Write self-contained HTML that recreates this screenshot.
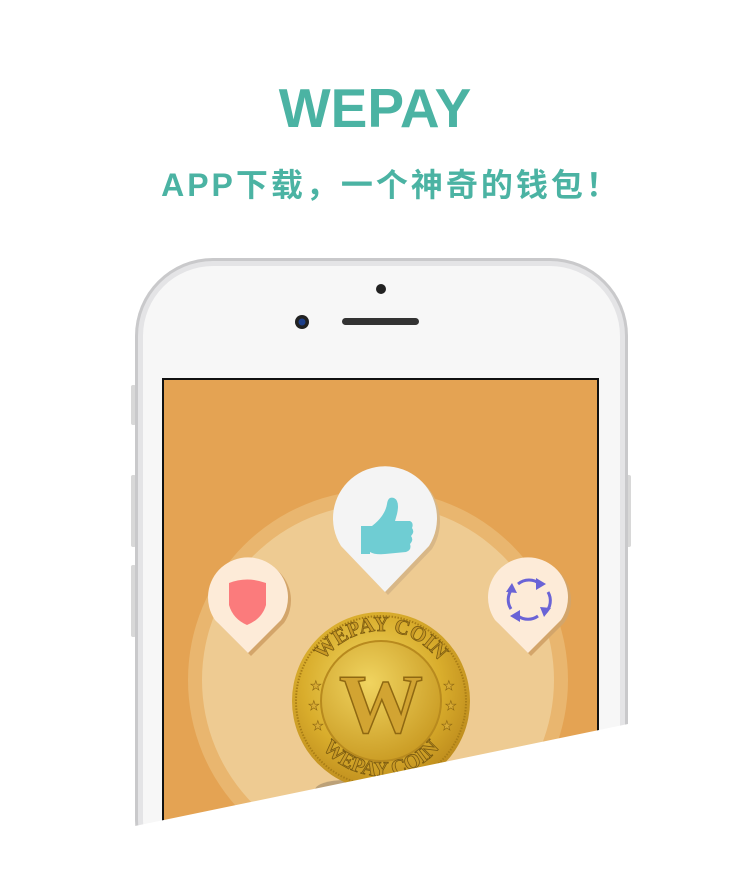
<!DOCTYPE html>
<html><head><meta charset="utf-8"><style>
html,body{margin:0;padding:0;background:#fff;width:750px;height:871px;overflow:hidden}
.t{position:absolute;left:0;width:750px;text-align:center;color:#4bb3a3;font-family:"Liberation Sans","Noto Sans CJK SC",sans-serif;font-weight:bold}
</style></head><body>
<div class="t" style="top:73px;font-size:55px;line-height:70px;">WEPAY</div>
<div class="t" style="top:165px;left:16px;font-size:32px;line-height:40px;letter-spacing:3px;">APP下载，一个神奇的钱包！</div>
<svg width="750" height="871" style="position:absolute;left:0;top:0" xmlns="http://www.w3.org/2000/svg">
<defs>
<radialGradient id="cg" cx="0.45" cy="0.4" r="0.65">
<stop offset="0" stop-color="#f3dc6a"/><stop offset="0.6" stop-color="#d9ad2c"/><stop offset="1" stop-color="#b9861a"/>
</radialGradient>
<radialGradient id="cg2" cx="0.4" cy="0.35" r="0.7">
<stop offset="0" stop-color="#f0d460"/><stop offset="1" stop-color="#c99a22"/>
</radialGradient>
<clipPath id="scr"><rect x="164" y="380" width="433" height="460"/></clipPath>
</defs>
<rect x="131" y="385" width="5" height="40" rx="2" fill="#d8d8d8"/>
<rect x="131" y="475" width="5" height="72" rx="2" fill="#d8d8d8"/>
<rect x="131" y="565" width="5" height="72" rx="2" fill="#d8d8d8"/>
<rect x="626" y="475" width="5" height="72" rx="2" fill="#d8d8d8"/>
<rect x="135" y="258" width="493" height="640" rx="78" fill="#c9c9cb"/>
<rect x="138" y="261" width="487" height="634" rx="75" fill="#e4e4e6"/>
<rect x="143" y="266" width="477" height="624" rx="70" fill="#f7f7f7"/>
<circle cx="381" cy="289" r="5" fill="#222"/>
<circle cx="302" cy="322" r="7" fill="#222"/><circle cx="302" cy="322" r="3.5" fill="#1d3f8a"/>
<rect x="342" y="318" width="77" height="7" rx="3.5" fill="#333"/>
<rect x="162" y="378" width="437" height="470" fill="#111"/>
<g clip-path="url(#scr)">
<rect x="164" y="380" width="433" height="470" fill="#e4a353"/>
<circle cx="378" cy="680" r="190" fill="#e9b66f"/>
<circle cx="378" cy="680" r="176" fill="#eecb92"/>
<ellipse cx="345" cy="790" rx="30" ry="10" fill="#a68e6e" opacity="0.7"/>
<circle cx="381" cy="701" r="89" fill="url(#cg)"/>
<circle cx="381" cy="701" r="85" fill="none" stroke="#a97d16" stroke-width="2" stroke-dasharray="1.5 1.5"/>
<circle cx="381" cy="701" r="60" fill="url(#cg2)" stroke="#b88a1e" stroke-width="2"/>
<text x="381" y="732" text-anchor="middle" font-family="Liberation Serif,serif" font-weight="bold" font-size="84" fill="#d2a432" stroke="#8f6812" stroke-width="1.5">W</text>
<path id="arcT" d="M311 701 A70 70 0 0 1 451 701" fill="none"/>
<text font-family="Liberation Serif,serif" font-weight="bold" font-size="21" fill="#c99a26" stroke="#7a5a10" stroke-width="0.8"><textPath href="#arcT" startOffset="50%" text-anchor="middle">WEPAY COIN</textPath></text>
<path id="arcB" d="M306 701 A75 75 0 0 0 456 701" fill="none"/>
<text font-family="Liberation Serif,serif" font-weight="bold" font-size="21" fill="#c99a26" stroke="#7a5a10" stroke-width="0.8"><textPath href="#arcB" startOffset="50%" text-anchor="middle">WEPAY COIN</textPath></text>
<g fill="#d8ab34" stroke="#8f6812" stroke-width="0.6" font-size="13" font-family="DejaVu Sans">
<text x="310" y="690">★</text><text x="308" y="710">★</text><text x="312" y="730">★</text>
<text x="443" y="690">★</text><text x="445" y="710">★</text><text x="441" y="730">★</text>
</g>
<path d="M341 546 A52 52 0 1 1 429 546 L385 592 Z" fill="#d8b787" transform="translate(3,3)"/>
<path d="M341 546 A52 52 0 1 1 429 546 L385 592 Z" fill="#f4f4f4"/>
<path d="M361 554 L361 526 L372 526 Q385 516 387 504 Q388 496 394 498 Q400 501 397 514 L395 521 L410 521 Q414 523 412 528 Q415 532 411 536 Q414 540 410 544 Q412 550 406 552 L385 554 Q375 555 370 552 L370 554 Z" fill="#6fcdd3"/>
<path d="M215 620 A40 40 0 1 1 281 620 L248 653 Z" fill="#d3a56a" transform="translate(3,3)"/>
<path d="M215 620 A40 40 0 1 1 281 620 L248 653 Z" fill="#fdebd8"/>
<path d="M229 583 Q247 576 266 583 L266 605 Q262 619 247 625 Q233 619 229 605 Z" fill="#fb7b7c"/>
<path d="M495 620 A40 40 0 1 1 561 620 L528 653 Z" fill="#d3a56a" transform="translate(3,3)"/>
<path d="M495 620 A40 40 0 1 1 561 620 L528 653 Z" fill="#fdebd8"/>
<g fill="none" stroke="#6a63d6" stroke-width="3">
<path d="M518 584 A17 17 0 0 1 540 584"/><path d="M548 592 A17 17 0 0 1 545 613"/>
<path d="M538 616 A17 17 0 0 1 518 616"/><path d="M511 609 A17 17 0 0 1 512 589"/>
</g>
<g fill="#6a63d6"><path d="M536 578 L546 584 L536 590Z"/><path d="M520 622 L510 616 L520 610Z"/><path d="M512 583 L517 593 L506 592Z"/><path d="M544 617 L540 607 L551 608Z"/></g>
</g>
<polygon points="0,828 135,826 628,724 750,722 750,871 0,871" fill="#fff"/>
</svg>
</body></html>
